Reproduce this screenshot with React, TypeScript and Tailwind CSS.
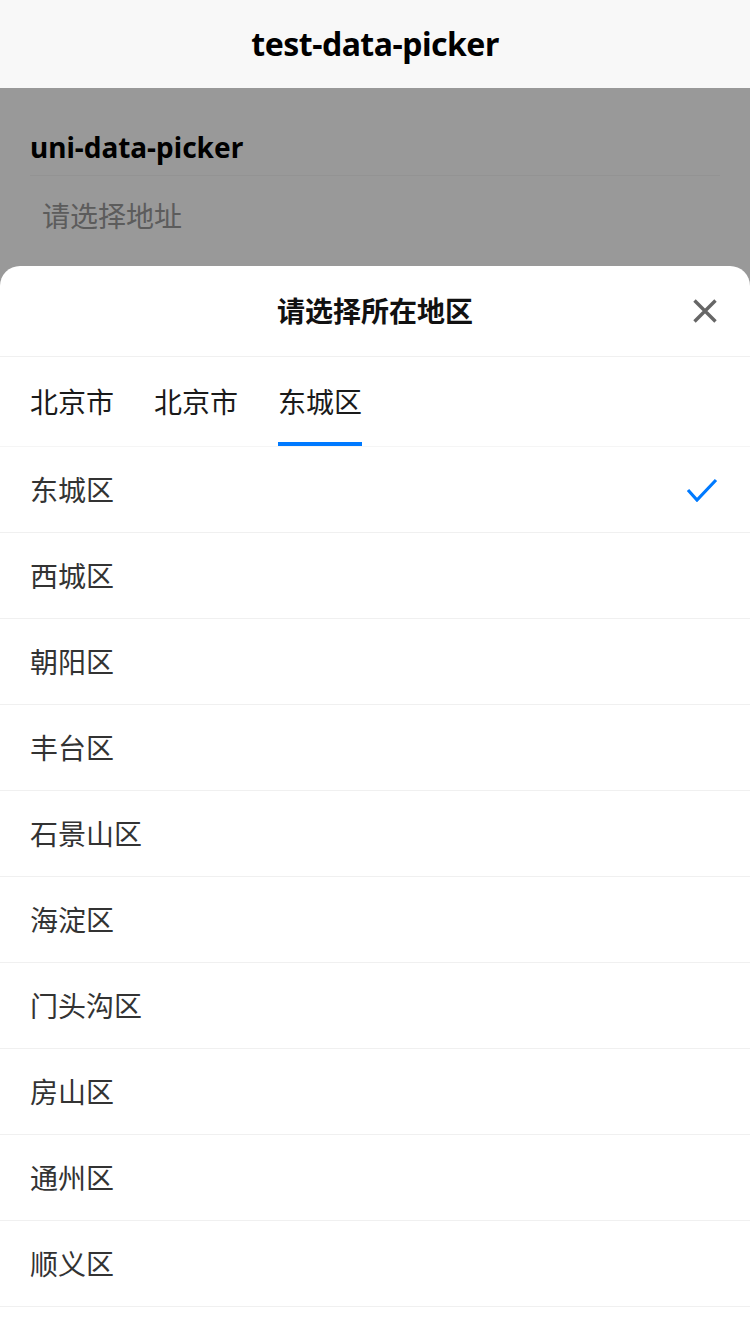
import { useState } from "react";

const tabs = ["北京市", "北京市", "东城区"];

const districts = [
  "东城区",
  "西城区",
  "朝阳区",
  "丰台区",
  "石景山区",
  "海淀区",
  "门头沟区",
  "房山区",
  "通州区",
  "顺义区",
];

const font = {
  fontFamily: '"Noto Sans", "Noto Sans CJK SC", sans-serif',
};

export default function App() {
  const [selected, setSelected] = useState("东城区");
  const [activeTab, setActiveTab] = useState(2);

  return (
    <div className="relative w-[750px] h-[1334px] overflow-hidden bg-white" style={font}>
      {/* Nav bar */}
      <div className="h-[88px] bg-[#f8f8f8] flex items-center justify-center">
        <h1 className="text-[32px] font-bold text-black tracking-[-0.5px]">test-data-picker</h1>
      </div>

      {/* Page content */}
      <div className="px-[30px] pt-[34px]">
        <h2 className="text-[28px] leading-[50px] font-bold text-black">uni-data-picker</h2>
        <div className="mt-[3px] h-[80px] border-t border-[#f6f6f6] flex items-center px-[12px]">
          <span className="text-[28px] text-[#999]">请选择地址</span>
        </div>
      </div>

      {/* Mask */}
      <div className="absolute left-0 right-0 top-[88px] bottom-0 bg-black/40" />

      {/* Popup */}
      <div className="absolute left-0 right-0 bottom-0 top-[266px] bg-white rounded-t-[20px] flex flex-col overflow-hidden">
        <div className="relative h-[91px] shrink-0 flex items-center justify-center border-b border-[#f0f0f0]">
          <span className="text-[28px] font-bold text-[#111]">请选择所在地区</span>
          <button className="absolute right-[33px] top-[33px] w-[24px] h-[24px]">
            <svg viewBox="0 0 24 24" width="24" height="24">
              <path d="M1.5 1.5 L22.5 22.5 M22.5 1.5 L1.5 22.5" stroke="#666" strokeWidth="3.4" />
            </svg>
          </button>
        </div>

        <div className="h-[90px] shrink-0 flex gap-[40px] px-[30px] border-b border-[#f5f5f5]">
          {tabs.map((t, i) => (
            <button
              key={i}
              onClick={() => setActiveTab(i)}
              className="relative h-full flex items-center text-[28px] text-[#1a1a1a]"
            >
              {t}
              {activeTab === i && (
                <span className="absolute left-0 right-0 bottom-0 h-[4px] bg-[#007aff]" />
              )}
            </button>
          ))}
        </div>

        <ul className="flex-1">
          {districts.map((d) => (
            <li
              key={d}
              onClick={() => setSelected(d)}
              className="h-[86px] border-b border-[#f0f0f0] flex items-center justify-between pl-[30px] pr-[32px]"
            >
              <span className="text-[28px] text-[#333]">{d}</span>
              {selected === d && (
                <svg viewBox="0 0 32 24" width="32" height="24">
                  <path d="M2 12 L11 22 L30 2" fill="none" stroke="#007aff" strokeWidth="3.2" />
                </svg>
              )}
            </li>
          ))}
        </ul>
      </div>
    </div>
  );
}
